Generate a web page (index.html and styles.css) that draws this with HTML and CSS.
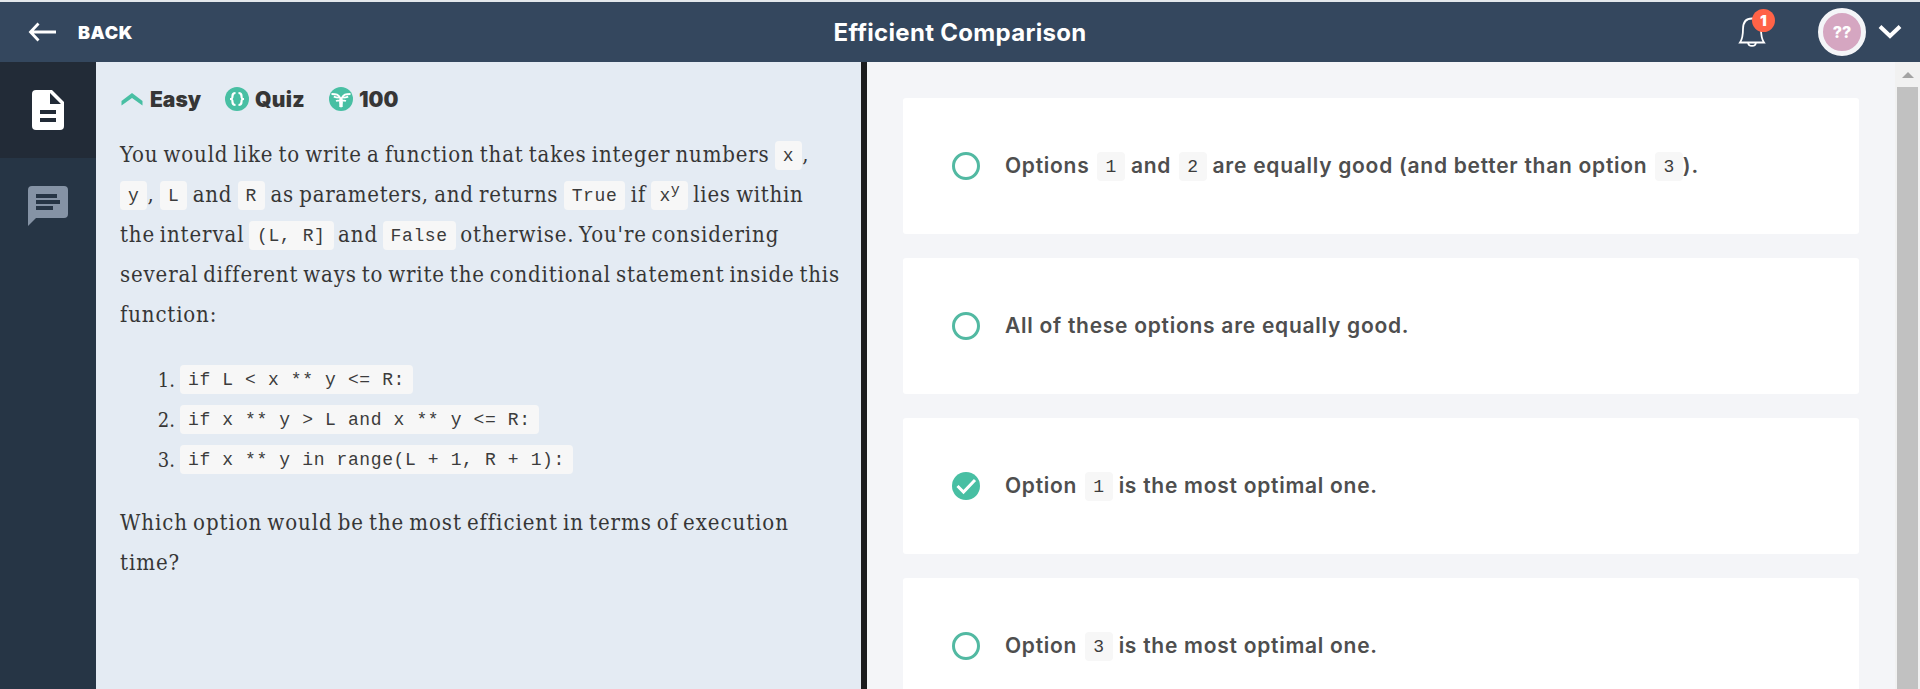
FILE: index.html
```html
<!DOCTYPE html>
<html lang="en">
<head>
<meta charset="utf-8">
<title>Efficient Comparison</title>
<link rel="stylesheet" href="styles.css">
</head>
<body>
<header class="topbar">
  <a class="back">
    <svg width="28" height="20" viewBox="0 0 28 20" fill="none" stroke="#fff" stroke-width="2.8"><path d="M28 10H2.5M10.500 1.500L2.500 10l8 8.500"/></svg>
    <span class="back-label">BACK</span>
  </a>
  <h1 class="title">Efficient Comparison</h1>
  <div class="account">
    <div class="bell">
      <svg width="28" height="32" viewBox="0 0 28 32" fill="none" stroke="#fff" stroke-width="1.800"><path d="M2 26.500C4.500 23 5 20 5 13C5 6 8.500 2.500 14 2.500S23 6 23 13c0 7 .5 10 3 13.500zM10 26.500c.3 4.500 7.700 4.500 8 0"/></svg>
      <span class="badge">1</span>
    </div>
    <div class="avatar">??</div>
    <svg class="chevron" width="24" height="16" viewBox="0 0 24 16" fill="none" stroke="#fff" stroke-width="4"><path d="M2 2.500l10 9.500 10-9.500"/></svg>
  </div>
</header>
<main class="workspace">
  <nav class="rail">
    <div class="tab tab-active">
      <svg width="32" height="40" viewBox="0 0 32 40"><path fill="#fff" d="M4 0h16l12 12v24a4 4 0 0 1-4 4H4a4 4 0 0 1-4-4V4a4 4 0 0 1 4-4z"/><path fill="#222b37" d="M18 3v11h11zM8 20h16v4H8zM8 28h16v4H8z"/></svg>
    </div>
    <div class="tab">
      <svg width="40" height="40" viewBox="0 0 40 40"><path fill="#8593a5" d="M4 0h32a4 4 0 0 1 4 4v24a4 4 0 0 1-4 4H8l-8 8V4a4 4 0 0 1 4-4z"/><path fill="#263545" d="M8 8h21v4H8zM8 14h24v4H8zM8 20h17v4H8z"/></svg>
    </div>
  </nav>
  <section class="task">
    <div class="meta">
      <span class="meta-item easy"><svg width="24" height="14" viewBox="0 0 24 14" fill="#48bfa3"><path d="M1.500 9L12 1 22.500 9v4.500L12 6 1.500 13.500z"/></svg>Easy</span>
      <span class="meta-item quiz"><svg width="24" height="24" viewBox="0 0 24 24"><circle cx="12" cy="12" r="12" fill="#48bfa3"/><path fill="none" stroke="#fff" stroke-width="2.200" d="M10.500 6C8 6 7.500 7 7.500 9s0 3-2.500 3c2.500 0 2.500 1 2.500 3s.5 3 3 3M13.500 6c2.500 0 3 1 3 3s0 3 2.500 3c-2.500 0-2.500 1-2.500 3s-.5 3-3 3"/></svg>Quiz</span>
      <span class="meta-item points"><svg width="24" height="24" viewBox="0 0 24 24"><circle cx="12" cy="12" r="12" fill="#48bfa3"/><path fill="none" stroke="#fff" stroke-width="1.800" d="M2.500 7c5 0 7 .5 8.700 4v9M21.500 7c-5 0-7 .5-8.700 4v9M4.800 9.700c2 .8 3 .9 5 .9M19.200 9.700c-2 .8-3 .9-5 .9M7 14c1.500-.6 2.500-.6 4-.6M17 14c-1.500-.6-2.500-.6-4-.6"/><path fill="#fff" d="M10.300 15h3.400L12 21.500z"/></svg>100</span>
    </div>
    <p class="prose"><span class="line-intro">You would like to write a function that takes integer numbers </span><code>x</code>,<br>
      <span class="line-params"><code>y</code>, <code>L</code> and <code>R</code> as parameters, and returns <code>True</code> if <code>x<sup>y</sup></code> lies within</span><br>
      <span class="line-interval">the interval <code>(L, R]</code> and <code>False</code> otherwise. You're considering</span><br>
      several different ways to write the conditional statement inside this<br>
      function:</p>
    <ol class="choices">
      <li><span class="num">1.</span><code>if L &lt; x ** y &lt;= R:</code></li>
      <li><span class="num">2.</span><code>if x ** y &gt; L and x ** y &lt;= R:</code></li>
      <li><span class="num">3.</span><code>if x ** y in range(L + 1, R + 1):</code></li>
    </ol>
    <p class="prose question">Which option would be the most efficient in terms of execution<br>time?</p>
  </section>
  <div class="divider"></div>
  <section class="answers">
    <div class="answer"><span class="radio"></span><p>Options <code>1</code> and <code>2</code> are equally good (and better than option <code>3</code>).</p></div>
    <div class="answer"><span class="radio"></span><p>All of these options are equally good.</p></div>
    <div class="answer"><span class="radio checked"><svg width="28" height="28" viewBox="0 0 28 28" fill="none" stroke="#fff" stroke-width="3"><path d="M5.500 14l6 6L23 8"/></svg></span><p>Option <code>1</code> is the most optimal one.</p></div>
    <div class="answer"><span class="radio"></span><p>Option <code>3</code> is the most optimal one.</p></div>
  </section>
  <div class="scrollbar"><span class="arrow"></span><span class="thumb"></span></div>
</main>
</body>
</html>
```
FILE: styles.css
```css
* { box-sizing: border-box; }
body {
  margin: 0;
  height: 689px;
  overflow: hidden;
  display: flex;
  flex-direction: column;
  font-family: Inter, "Open Sans", sans-serif;
}
p, h1, ol { margin: 0; padding: 0; }
svg { display: block; flex: none; }
.topbar {
  height: 62px;
  flex: none;
  border-top: 2px solid #e3e8ec;
  background: #34475e;
  color: #fff;
  display: grid;
  grid-template-columns: 1fr auto 1fr;
  align-items: center;
}
.back { display: flex; align-items: center; gap: 22px; padding-left: 28px; }
.back-label { font-size: 18px; font-weight: 900; letter-spacing: .6px; padding-top: 1px; }
.title { font-size: 24px; font-weight: 700; line-height: 30px; padding-top: 1px; letter-spacing: .3px; }
.account { display: flex; align-items: center; justify-content: flex-end; padding-right: 18px; }
.bell { position: relative; width: 28px; height: 32px; margin-right: 52px; }
.badge {
  position: absolute;
  left: 14px;
  top: -7px;
  width: 23px;
  height: 23px;
  border-radius: 50%;
  background: #ff6347;
  font-size: 15px;
  font-weight: 900;
  line-height: 23px;
  text-align: center;
}
.avatar {
  width: 48px;
  height: 48px;
  border: 5px solid #f4f5f8;
  border-radius: 50%;
  background: #d5a6c1;
  font-size: 16px;
  font-weight: 800;
  line-height: 38px;
  text-align: center;
}
.chevron { margin-left: 12px; }
.workspace { flex: 1; min-height: 0; display: flex; }
.rail { width: 96px; background: #263545; }
.tab { height: 96px; display: flex; align-items: center; justify-content: center; }
.tab-active { background: #222b37; }
.task { width: 765px; padding: 24px 0 0 24px; background: #e4ebf3; color: #363636; }
.meta { height: 26px; display: flex; align-items: center; font-size: 21px; font-weight: 900; }
.meta-item { display: flex; align-items: center; gap: 6px; }
.easy { width: 105px; }
.quiz { width: 104px; letter-spacing: .3px; }
.prose {
  margin-top: 23px;
  font: 22px/40px "DejaVu Serif Condensed", "DejaVu Serif", serif;
  font-stretch: condensed;
  letter-spacing: .86px;
  word-spacing: -2.2px;
  white-space: nowrap;
}
.line-intro { letter-spacing: .84px; word-spacing: -1.9px; }
.line-params { letter-spacing: .7px; word-spacing: -1.5px; }
.line-interval { letter-spacing: .9px; word-spacing: -2.6px; }
.question { letter-spacing: .95px; }
code {
  display: inline-block;
  height: 29px;
  padding: 0 8px;
  border-radius: 4px;
  background: #f7f7f7;
  color: #3c3c3c;
  font: 18px/31px "Liberation Mono", monospace;
  letter-spacing: .62px;
  word-spacing: 0;
  white-space: pre;
  vertical-align: 1px;
}
sup { font-size: 15px; line-height: 0; letter-spacing: 0; }
.choices { list-style: none; margin-top: 25px; }
.choices li { height: 40px; display: flex; align-items: center; padding-bottom: 1px; }
.num { width: 60px; padding-right: 5px; text-align: right; font: 20px/40px "DejaVu Serif Condensed", "DejaVu Serif", serif; }
.divider { width: 6px; background: #1b1c1e; }
.answers {
  flex: 1;
  padding: 36px 36px 0;
  background: #f4f5f8;
  display: flex;
  flex-direction: column;
  gap: 24px;
  overflow: hidden;
}
.answer {
  flex: none;
  height: 136px;
  padding-left: 49px;
  border-radius: 3px;
  background: #fff;
  color: #4e4e4e;
  display: flex;
  align-items: center;
  gap: 25px;
  font-size: 21px;
  font-weight: 600;
  line-height: 40px;
  letter-spacing: .73px;
  white-space: nowrap;
}
.answer code { margin-left: 2px; }
.radio { flex: none; width: 28px; height: 28px; border: 3px solid #52b9a2; border-radius: 50%; }
.checked { border: 0; background: #48bfa3; }
.scrollbar { width: 25px; padding: 10px 2px 0; background: #f1f1f1; display: flex; flex-direction: column; align-items: center; }
.arrow { border: 6px solid transparent; border-top: 0; border-bottom-color: #a3a3a3; }
.thumb { flex: 1; width: 21px; margin-top: 9px; background: #c1c1c1; }
```
